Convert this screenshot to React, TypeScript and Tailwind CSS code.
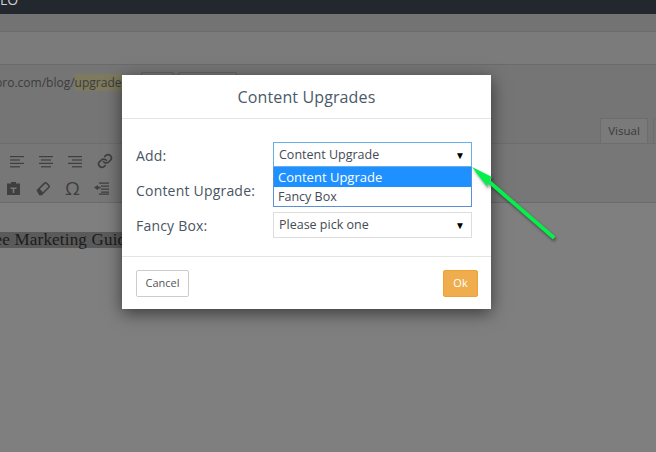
import React from "react";

const Lines = ({ kind }: { kind: "l" | "c" | "r" }) => {
  const short = kind === "l" ? [0, 10] : kind === "c" ? [2, 12] : [4, 14];
  const rows = [[0, 14], short, [0, 14], short];
  return (
    <svg width="14" height="13" viewBox="0 0 14 13">
      {rows.map(([a, b], i) => (
        <rect key={i} x={a} y={i * 3.4 + 1} width={b - a} height="1.2" fill="#3f3f3f" />
      ))}
    </svg>
  );
};

export default function App() {
  return (
    <div className="relative h-[452px] w-[656px] overflow-hidden bg-[#7f7f7f] font-['Open_Sans',sans-serif]">
      <div className="h-[14px] overflow-hidden bg-[#22282e]">
        <div className="-mt-[8px] text-[14px] leading-[16px] text-[#cfcfcf]">LO</div>
      </div>
      <div className="h-[17px] bg-[#737373]" />
      <div className="h-[34px] border-y border-[#6b6b6b] bg-[#7b7b7b]" />
      <div className="flex h-[79px] justify-between border-b border-[#6d6d6d] bg-[#757575]">
        <div className="-ml-[5px] flex h-[30px] items-start pt-[9px] text-[12px] leading-[17px] text-[#3c3c3c]">
          <span>pro.com/blog/</span>
          <span className="bg-[#7d7a5e]">upgrade-</span>
          <span className="-mt-[2px] ml-[16px] h-[20px] w-[33px] rounded-[2px] border border-[#636363]" />
          <span className="-mt-[2px] ml-[4px] h-[20px] w-[59px] rounded-[2px] border border-[#636363]" />
        </div>
        <div className="flex items-end gap-[5px] self-end">
          <div className="flex h-[25px] w-[48px] items-center justify-center border border-b-0 border-[#6d6d6d] bg-[#7a7a7a] text-[11.5px] text-[#3a3a3a]">
            Visual
          </div>
          <div className="h-[25px] w-[3px] border-l border-t border-[#6d6d6d]" />
        </div>
      </div>
      <div className="h-[59px] border-b border-[#6a6a6a] bg-[#777777] pt-[3px]">
        <div className="flex h-[28px] items-center gap-[15px] pl-[10px]">
          <Lines kind="l" />
          <Lines kind="c" />
          <Lines kind="r" />
          <svg width="16" height="16" viewBox="0 0 24 24" fill="none" stroke="#3f3f3f" strokeWidth="2.6" strokeLinecap="round" strokeLinejoin="round">
            <path d="M10 13a5 5 0 0 0 7.500.5l3-3a5 5 0 0 0-7-7l-1.700 1.700" />
            <path d="M14 11a5 5 0 0 0-7.500-.5l-3 3a5 5 0 0 0 7 7l1.700-1.700" />
          </svg>
        </div>
        <div className="flex h-[26px] items-center gap-[15px] pl-[6px]">
          <svg width="15" height="15" viewBox="0 0 15 15">
            <path d="M1 2.500h4V1h5v1.500h4V14H1z" fill="#3f3f3f" />
            <path d="M4.500 6.500h6V8H8.300v4H6.700V8H4.500z" fill="#777777" />
          </svg>
          <svg width="14" height="15" viewBox="0 0 15 15">
            <path d="M1.500 9.500 9 2a1.800 1.800 0 0 1 2.500 0l2 2a1.800 1.800 0 0 1 0 2.500L6 14H4z" fill="none" stroke="#3f3f3f" strokeWidth="1.600" />
            <path d="M1.500 9.500 3.500 7.500 7.500 11.500 6 14H4z" fill="#3f3f3f" />
          </svg>
          <span className="w-[14px] text-center text-[19px] leading-none text-[#3f3f3f]">Ω</span>
          <svg width="15" height="13" viewBox="0 0 15 13">
            <path d="M5 0.500h10v1.200H5zM7 3.500h8v1.200H7zM7 6.500h8v1.200H7zM7 9.500h8v1.200H7zM5 11.500h10v1.200H5z" fill="#3f3f3f" />
            <path d="M0 5.500 4 3v1.800h2.500v1.600H4v1.800z" fill="#3f3f3f" />
          </svg>
        </div>
      </div>
      <div className="mt-[29px] -ml-[21px] font-['Liberation_Serif',serif] text-[17px] leading-[16px] tracking-[0.2px] text-[#1c1c1c]">
        <span className="inline-block bg-[#5a5a5a]">Free Marketing Guide</span>
      </div>

      <div className="absolute left-[122px] top-[75px] w-[369px] bg-white shadow-[0_4px_16px_rgba(0,0,0,0.55)]">
        <div className="flex h-[44px] items-center justify-center border-b border-[#e5e5e5] text-[16px] tracking-[0.12px] text-[#4a5a6a]">
          Content Upgrades
        </div>
        <div className="h-[137px] pl-[14px] pr-[19px] pt-[23px] text-[14px] tracking-[0.2px] text-[#4a5563]">
          <div className="flex h-[26px] items-center">
            <span>Add:</span>
          </div>
          <div className="mt-[9px] flex h-[26px] items-center">
            <span>Content Upgrade:</span>
          </div>
          <div className="mt-[9px] flex h-[26px] items-center">
            <span>Fancy Box:</span>
          </div>
        </div>
        <div className="flex h-[53px] items-center justify-between border-t border-[#e5e5e5] pl-[14px] pr-[13px]">
          <div className="flex h-[27px] w-[53px] items-center justify-center rounded-[2px] border border-[#cccccc] pt-[1px] text-[11px] text-[#555555]">
            Cancel
          </div>
          <div className="flex h-[27px] w-[35px] items-center justify-center rounded-[2px] border border-[#eea236] bg-[#f0ad4e] pt-[1px] text-[11px] text-white">
            Ok
          </div>
        </div>

        <div className="absolute left-[151px] top-[67px] w-[199px] text-[12.5px] leading-[16px] text-[#444b55]">
          <div className="flex h-[25px] items-center justify-between border border-[#66afe9] bg-white pl-[5px] pr-[6px]">
            <span>Content Upgrade</span>
            <span className="text-[10px] text-black">▼</span>
          </div>
          <div className="border border-t-0 border-[#5b8fd6] bg-white">
            <div className="flex h-[20px] items-center bg-[#1e90ff] pl-[4px] text-[13px] text-white">Content Upgrade</div>
            <div className="flex h-[19px] items-center pl-[4px]">Fancy Box</div>
          </div>
        </div>
        <div className="absolute left-[151px] top-[137px] flex h-[26px] w-[199px] items-center justify-between border border-[#dddddd] bg-white pl-[5px] pr-[6px] text-[12.5px] text-[#444b55]">
          <span>Please pick one</span>
          <span className="text-[10px] text-black">▼</span>
        </div>
      </div>

      <svg className="absolute left-[465px] top-[160px]" width="100" height="85" viewBox="0 0 100 85" style={{ filter: "drop-shadow(1px 2px 1.500px rgba(0,0,0,0.45))" }}>
        <path d="M7 7 27 17 24.500 19.500 90.500 76.500 88 79.500 21.500 22 23 28z" fill="#05f04a" />
      </svg>
    </div>
  );
}
